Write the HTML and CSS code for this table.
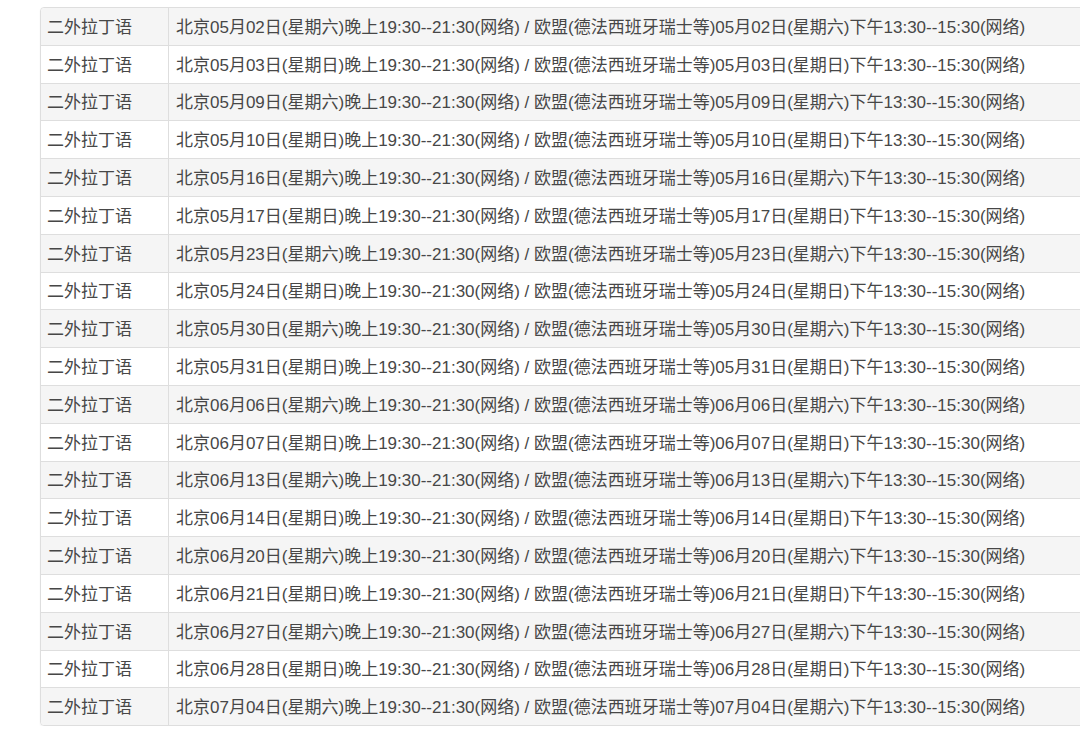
FILE: index.html
```html
<!DOCTYPE html>
<html lang="zh-CN">
<head>
<meta charset="utf-8">
<title>二外拉丁语</title>
<link rel="stylesheet" href="styles.css">
</head>
<body>
<div class="wrap">
<table class="schedule">
<tbody>
<tr><td class="lang">二外拉丁语</td><td class="time">北京05月02日(星期六)晚上19:30--21:30(网络) / 欧盟(德法西班牙瑞士等)05月02日(星期六)下午13:30--15:30(网络)</td></tr>
<tr><td class="lang">二外拉丁语</td><td class="time">北京05月03日(星期日)晚上19:30--21:30(网络) / 欧盟(德法西班牙瑞士等)05月03日(星期日)下午13:30--15:30(网络)</td></tr>
<tr><td class="lang">二外拉丁语</td><td class="time">北京05月09日(星期六)晚上19:30--21:30(网络) / 欧盟(德法西班牙瑞士等)05月09日(星期六)下午13:30--15:30(网络)</td></tr>
<tr><td class="lang">二外拉丁语</td><td class="time">北京05月10日(星期日)晚上19:30--21:30(网络) / 欧盟(德法西班牙瑞士等)05月10日(星期日)下午13:30--15:30(网络)</td></tr>
<tr><td class="lang">二外拉丁语</td><td class="time">北京05月16日(星期六)晚上19:30--21:30(网络) / 欧盟(德法西班牙瑞士等)05月16日(星期六)下午13:30--15:30(网络)</td></tr>
<tr><td class="lang">二外拉丁语</td><td class="time">北京05月17日(星期日)晚上19:30--21:30(网络) / 欧盟(德法西班牙瑞士等)05月17日(星期日)下午13:30--15:30(网络)</td></tr>
<tr><td class="lang">二外拉丁语</td><td class="time">北京05月23日(星期六)晚上19:30--21:30(网络) / 欧盟(德法西班牙瑞士等)05月23日(星期六)下午13:30--15:30(网络)</td></tr>
<tr><td class="lang">二外拉丁语</td><td class="time">北京05月24日(星期日)晚上19:30--21:30(网络) / 欧盟(德法西班牙瑞士等)05月24日(星期日)下午13:30--15:30(网络)</td></tr>
<tr><td class="lang">二外拉丁语</td><td class="time">北京05月30日(星期六)晚上19:30--21:30(网络) / 欧盟(德法西班牙瑞士等)05月30日(星期六)下午13:30--15:30(网络)</td></tr>
<tr><td class="lang">二外拉丁语</td><td class="time">北京05月31日(星期日)晚上19:30--21:30(网络) / 欧盟(德法西班牙瑞士等)05月31日(星期日)下午13:30--15:30(网络)</td></tr>
<tr><td class="lang">二外拉丁语</td><td class="time">北京06月06日(星期六)晚上19:30--21:30(网络) / 欧盟(德法西班牙瑞士等)06月06日(星期六)下午13:30--15:30(网络)</td></tr>
<tr><td class="lang">二外拉丁语</td><td class="time">北京06月07日(星期日)晚上19:30--21:30(网络) / 欧盟(德法西班牙瑞士等)06月07日(星期日)下午13:30--15:30(网络)</td></tr>
<tr><td class="lang">二外拉丁语</td><td class="time">北京06月13日(星期六)晚上19:30--21:30(网络) / 欧盟(德法西班牙瑞士等)06月13日(星期六)下午13:30--15:30(网络)</td></tr>
<tr><td class="lang">二外拉丁语</td><td class="time">北京06月14日(星期日)晚上19:30--21:30(网络) / 欧盟(德法西班牙瑞士等)06月14日(星期日)下午13:30--15:30(网络)</td></tr>
<tr><td class="lang">二外拉丁语</td><td class="time">北京06月20日(星期六)晚上19:30--21:30(网络) / 欧盟(德法西班牙瑞士等)06月20日(星期六)下午13:30--15:30(网络)</td></tr>
<tr><td class="lang">二外拉丁语</td><td class="time">北京06月21日(星期日)晚上19:30--21:30(网络) / 欧盟(德法西班牙瑞士等)06月21日(星期日)下午13:30--15:30(网络)</td></tr>
<tr><td class="lang">二外拉丁语</td><td class="time">北京06月27日(星期六)晚上19:30--21:30(网络) / 欧盟(德法西班牙瑞士等)06月27日(星期六)下午13:30--15:30(网络)</td></tr>
<tr><td class="lang">二外拉丁语</td><td class="time">北京06月28日(星期日)晚上19:30--21:30(网络) / 欧盟(德法西班牙瑞士等)06月28日(星期日)下午13:30--15:30(网络)</td></tr>
<tr><td class="lang">二外拉丁语</td><td class="time">北京07月04日(星期六)晚上19:30--21:30(网络) / 欧盟(德法西班牙瑞士等)07月04日(星期六)下午13:30--15:30(网络)</td></tr>
</tbody>
</table>
</div>
</body>
</html>
```
FILE: styles.css
```css
html, body {
  margin: 0;
  padding: 0;
  background: #ffffff;
  overflow: hidden;
}

.wrap {
  padding: 7px 0 0 40px;
  width: 1100px;
}

.schedule {
  border-collapse: separate;
  border-spacing: 0;
  width: 1100px;
  border: 1px solid #dedede;
  border-radius: 4px;
  font-family: "Liberation Sans", "Noto Sans CJK SC", sans-serif;
  font-size: 17px;
  color: #474747;
  box-shadow: 0 1px 2px rgba(0, 0, 0, 0.06);
}

.schedule td {
  height: 37.8px;
  padding: 3px 7px 0;
  box-sizing: border-box;
  white-space: nowrap;
  vertical-align: middle;
  border-top: 1px solid #dedede;
  line-height: 20px;
}

.schedule tr:first-child td {
  border-top: none;
  height: 36.8px;
}

.schedule td.lang {
  width: 128px;
  padding: 3px 8px 0 6px;
  border-right: 1px solid #dedede;
}

.schedule tr:nth-child(odd) td {
  background: #f5f5f5;
}

.schedule tr:first-child td.lang { border-top-left-radius: 4px; }
.schedule tr:last-child td.lang { border-bottom-left-radius: 4px; }
```
